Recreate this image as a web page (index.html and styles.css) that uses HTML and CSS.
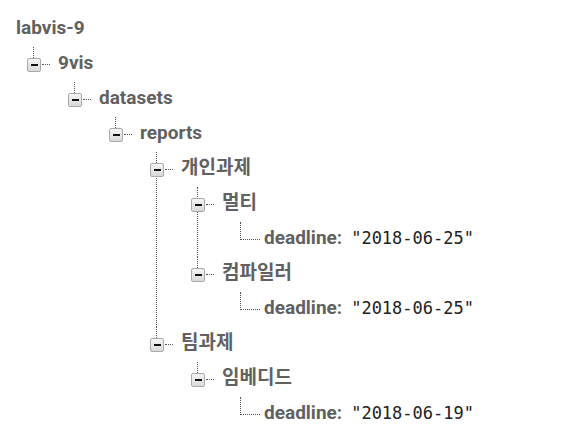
FILE: index.html
```
<!DOCTYPE html>
<html lang="ko">
<head>
<meta charset="utf-8">
<title>labvis-9</title>
<link rel="stylesheet" href="styles.css">
</head>
<body>
<div class="tree">
  <div class="row root-row"><span class="key">labvis-9</span></div>
  <ul class="level">
    <li class="branch last">
      <div class="row"><span class="toggle"></span><span class="dash"></span><span class="key">9vis</span></div>
      <ul class="children">
        <li class="branch last">
          <div class="row"><span class="toggle"></span><span class="dash"></span><span class="key">datasets</span></div>
          <ul class="children">
            <li class="branch last">
              <div class="row"><span class="toggle"></span><span class="dash"></span><span class="key">reports</span></div>
              <ul class="children">
                <li class="branch">
                  <div class="row"><span class="toggle"></span><span class="dash"></span><span class="key">개인과제</span></div>
                  <ul class="children">
                    <li class="branch">
                      <div class="row"><span class="toggle"></span><span class="dash"></span><span class="key">멀티</span></div>
                      <ul class="children">
                        <li class="leaf">
                          <div class="row"><span class="elbow"></span><span class="key">deadline:</span><span class="value">"2018-06-25"</span></div>
                        </li>
                      </ul>
                    </li>
                    <li class="branch last">
                      <div class="row"><span class="toggle"></span><span class="dash"></span><span class="key">컴파일러</span></div>
                      <ul class="children">
                        <li class="leaf">
                          <div class="row"><span class="elbow"></span><span class="key">deadline:</span><span class="value">"2018-06-25"</span></div>
                        </li>
                      </ul>
                    </li>
                  </ul>
                </li>
                <li class="branch last">
                  <div class="row"><span class="toggle"></span><span class="dash"></span><span class="key">팀과제</span></div>
                  <ul class="children">
                    <li class="branch last">
                      <div class="row"><span class="toggle"></span><span class="dash"></span><span class="key">임베디드</span></div>
                      <ul class="children">
                        <li class="leaf">
                          <div class="row"><span class="elbow"></span><span class="key">deadline:</span><span class="value">"2018-06-19"</span></div>
                        </li>
                      </ul>
                    </li>
                  </ul>
                </li>
              </ul>
            </li>
          </ul>
        </li>
      </ul>
    </li>
  </ul>
</div>
</body>
</html>
```
FILE: styles.css
```
* { box-sizing: border-box; }
body {
  margin: 0;
  background: #fff;
  font-family: Roboto, "Noto Sans CJK KR", sans-serif;
}
.tree { padding: 12px 0 0 16px; }
ul { list-style: none; margin: 0; padding: 0; }
.level { margin-left: 11px; }
.children { margin-left: 41px; }
li { position: relative; }
li.branch::before {
  content: "";
  position: absolute;
  left: 6px;
  top: 0;
  height: 100%;
  border-left: 1px dotted #555;
}
li.branch.last::before { height: 11px; }
.row {
  height: 35px;
  display: flex;
  align-items: center;
}
.key {
  font-weight: 700;
  font-size: 19px;
  color: #616161;
  line-height: 22px;
  margin-bottom: 4px;
  white-space: nowrap;
}
.toggle {
  position: relative;
  z-index: 1;
  flex: none;
  width: 14px;
  height: 14px;
  border: 1px solid #a9a9a9;
  border-radius: 2px;
  background: linear-gradient(#f6f6f6, #d9d9d9);
  display: flex;
  align-items: center;
  justify-content: center;
}
.toggle::after {
  content: "";
  width: 7px;
  height: 2px;
  background: #111;
}
.dash {
  flex: none;
  width: 8px;
  border-top: 1px dotted #555;
  margin: 0 8px 0 1px;
}
.elbow {
  flex: none;
  align-self: flex-start;
  width: 20px;
  height: 18px;
  border-left: 1px dotted #555;
  border-bottom: 1px dotted #555;
  margin: 0 4px 0 8px;
}
.value {
  font-family: "DejaVu Sans Mono", monospace;
  font-size: 17px;
  color: #212121;
  margin-left: 9px;
  margin-bottom: 4px;
  line-height: 22px;
  white-space: nowrap;
}
```
